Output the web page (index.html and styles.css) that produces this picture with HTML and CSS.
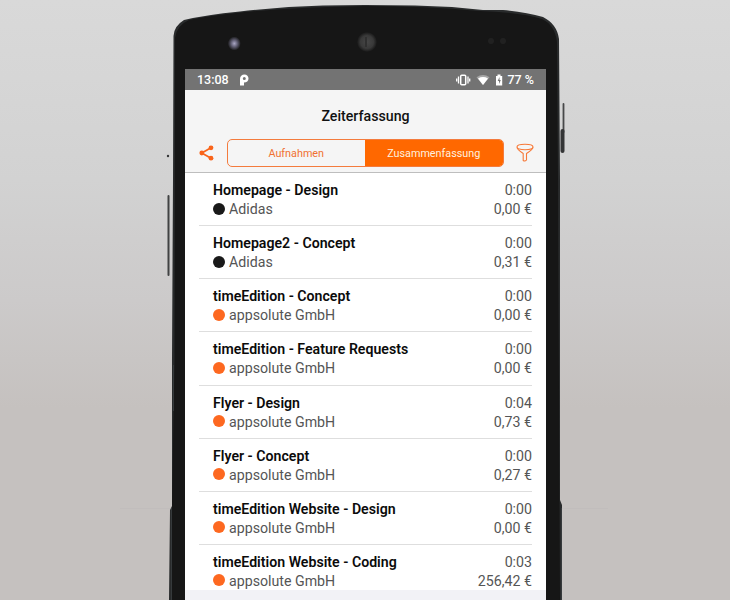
FILE: index.html
```html
<!DOCTYPE html>
<html lang="de">
<head>
<meta charset="utf-8">
<title>Zeiterfassung</title>
<link rel="stylesheet" href="styles.css">
</head>
<body>
<main class="stage">
  <svg class="phone" viewBox="0 0 730 600" aria-hidden="true">
    <defs>
      <radialGradient id="lens"><stop offset="0" stop-color="#474747"/><stop offset=".65" stop-color="#393939"/><stop offset="1" stop-color="#171717"/></radialGradient>
      <radialGradient id="sensor"><stop offset="0" stop-color="#aaa7c4"/><stop offset=".45" stop-color="#66647a"/><stop offset="1" stop-color="#171717"/></radialGradient>
    </defs>
    <path d="M120 508.500H170M562 508.500H608" stroke="#bfbcba" stroke-width=".7"/>
    <path d="M168.500 196V275" stroke="#414243" stroke-width="2" stroke-linecap="round"/>
    <circle cx="168" cy="156" r="1.200" fill="#363738"/>
    <path d="M563.500 104V132" stroke="#474849" stroke-width="1.800" stroke-linecap="round"/>
    <path d="M562.500 131V151" stroke="#343536" stroke-width="4" stroke-linecap="round"/>
    <path d="M169 600L170 510L172 506V360L173 180L173.500 36Q174 26 184 20Q205 15 240 11.500Q282 6.500 323 5.500L365 5L415 5.500L452 7L483 10L503 10Q526 12 543 17Q557 24 559 39L560 180V500L562 505V600Z" fill="#292b2c"/>
    <path d="M172 600V505L174.500 360L175 38Q177 25 189 20Q213 15 245 12Q300 7 365 6Q425 6 479 11Q519 12 542 19Q555 25 557 42L558 180L560 600Z" fill="#161616"/>
    <path d="M171.500 600V508M173.500 365V411M561.500 600V508" stroke="#363a3c" stroke-width="1"/>
    <ellipse cx="234.300" cy="43.500" rx="6.500" ry="7" fill="url(#sensor)"/>
    <circle cx="367" cy="42" r="10" fill="url(#lens)"/>
    <path d="M366 37V47" stroke="#303030" stroke-width="2"/>
    <circle cx="491" cy="41" r="3" fill="#212121"/><circle cx="503" cy="41" r="3" fill="#212121"/>
  </svg>
  <section class="screen">
    <div class="status">
      <span class="clock">13:08</span>
      <svg class="pie" viewBox="0 0 10 12"><path fill="#fff" fill-rule="evenodd" d="M1 5C1 2 3 .5 5.300.5C8 .5 9.500 2.300 9.500 4.500C9.500 7 7.700 8.500 5 8.500V11.500H1ZM5.300 3A1.500 1.500 0 1 0 5.300 6A1.500 1.500 0 1 0 5.300 3Z"/></svg>
      <svg class="signals" viewBox="0 0 48 14"><g fill="none" stroke="#fff"><rect x="4.700" y="2.200" width="5" height="9.600" rx="1" stroke-width="1.500"/><path d="M2.500 3.500V10.500M.7 5.500V8.500M12 3.500V10.500M13.700 5.500V8.500" stroke-width="1.300"/></g><path d="M20.500 4.200Q27 0 33.500 4.200L27 12Z" fill="#a7a7a7"/><path d="M22 5.500Q27 2.700 32 5.500L27 12Z" fill="#fff"/><path d="M40 3H41.500V1.500H44.500V3H46.200V12.500H40Z" fill="#fff"/><path d="M43.500 4L41.700 8H43V11L44.800 7H43.500Z" fill="#737373"/></svg>
      <span class="battery">77 %</span>
    </div>
    <header class="header">
      <h1>Zeiterfassung</h1>
      <nav class="toolbar">
        <svg class="share" viewBox="0 0 15 16"><path d="M12 2.800L2.800 8L12 13.200" fill="none" stroke="#f9641a" stroke-width="1.700"/><g fill="#f9641a"><circle cx="12" cy="2.800" r="2.400"/><circle cx="2.800" cy="8" r="2.400"/><circle cx="12" cy="13.200" r="2.400"/></g></svg>
        <div class="tabs"><span class="tab">Aufnahmen</span><span class="tab active">Zusammenfassung</span></div>
        <svg class="filter" viewBox="0 0 18 20"><g fill="none" stroke="#f77938" stroke-width="1.100" stroke-linejoin="round"><ellipse cx="9" cy="4" rx="8" ry="2.700"/><path d="M1 4.500Q1.300 6.500 7.200 10.500V17.500Q9 18.700 10.500 17V10.500Q16.700 6.500 17 4.500"/></g></svg>
      </nav>
    </header>
    <ul class="list">
      <li class="row"><b class="title">Homepage - Design</b><span class="value">0:00</span><span class="client"><i class="dot dark"></i>Adidas</span><span class="value">0,00 €</span></li>
      <li class="row"><b class="title">Homepage2 - Concept</b><span class="value">0:00</span><span class="client"><i class="dot dark"></i>Adidas</span><span class="value">0,31 €</span></li>
      <li class="row"><b class="title">timeEdition - Concept</b><span class="value">0:00</span><span class="client"><i class="dot"></i>appsolute GmbH</span><span class="value">0,00 €</span></li>
      <li class="row"><b class="title">timeEdition - Feature Requests</b><span class="value">0:00</span><span class="client"><i class="dot"></i>appsolute GmbH</span><span class="value">0,00 €</span></li>
      <li class="row"><b class="title">Flyer - Design</b><span class="value">0:04</span><span class="client"><i class="dot"></i>appsolute GmbH</span><span class="value">0,73 €</span></li>
      <li class="row"><b class="title">Flyer - Concept</b><span class="value">0:00</span><span class="client"><i class="dot"></i>appsolute GmbH</span><span class="value">0,27 €</span></li>
      <li class="row"><b class="title">timeEdition Website - Design</b><span class="value">0:00</span><span class="client"><i class="dot"></i>appsolute GmbH</span><span class="value">0,00 €</span></li>
      <li class="row"><b class="title">timeEdition Website - Coding</b><span class="value">0:03</span><span class="client"><i class="dot"></i>appsolute GmbH</span><span class="value">256,42 €</span></li>
    </ul>
  </section>
</main>
</body>
</html>
```
FILE: styles.css
```css
* { box-sizing: border-box; }
body { margin: 0; font-family: Roboto, "Liberation Sans", sans-serif; }
.stage { position: relative; width: 730px; height: 600px; overflow: hidden; padding: 69px 184px 0 185px; background: linear-gradient(#d9d9d9 0, #d2d2d2 30%, #cccaca 50%, #c5c1bf 68%, #c5c1bf 100%); }
.phone { position: absolute; inset: 0; width: 730px; height: 600px; }
.screen { position: relative; width: 361px; height: 531px; background: #f2f2f6; display: flex; flex-direction: column; }
.status { height: 21px; flex: none; display: flex; align-items: center; background: #737373; color: #fff; padding: 0 12px; font-size: 12.5px; font-weight: 500; line-height: 21px; }
.clock { width: 42px; }
.pie { width: 10px; height: 12px; }
.signals { width: 48px; height: 14px; margin-left: auto; margin-right: 3px; }
.header { height: 83px; flex: none; background: #f5f5f5; border-bottom: 1px solid #bebebe; padding-top: 16px; }
h1 { margin: 0; font-size: 14.2px; font-weight: 500; line-height: 20px; text-align: center; color: #111; }
.toolbar { display: flex; align-items: center; height: 28px; margin-top: 13px; padding: 0 12px 0 14px; }
.share { width: 15px; height: 16px; margin-right: 13px; }
.tabs { display: flex; width: 277px; height: 28px; border: 1px solid #f47b3d; border-radius: 5px; overflow: hidden; }
.tab { width: 137px; font-size: 10.8px; line-height: 27px; text-align: center; color: #f07132; }
.active { width: 139px; background: #ff6800; color: #fff0df; }
.filter { width: 18px; height: 20px; margin-left: 12px; }
.list { list-style: none; margin: 0; padding: 0 14px; background: #fff; height: 417px; overflow: hidden; }
.row { height: 53.150px; display: grid; grid-template-columns: 1fr auto; grid-template-rows: 19px 19px; padding: 8px 0 0 14px; font-size: 14.2px; line-height: 19px; color: #555; border-bottom: 1px solid #dedede; }
.title { font-weight: 600; color: #0b0b0b; font-size: 14.15px; }
.value { text-align: right; }
.client { display: flex; align-items: center; }
.dot { width: 12px; height: 12px; border-radius: 50%; background: #fd6820; margin: 0 4px 2px 0; }
.dark { background: #191919; }
```
